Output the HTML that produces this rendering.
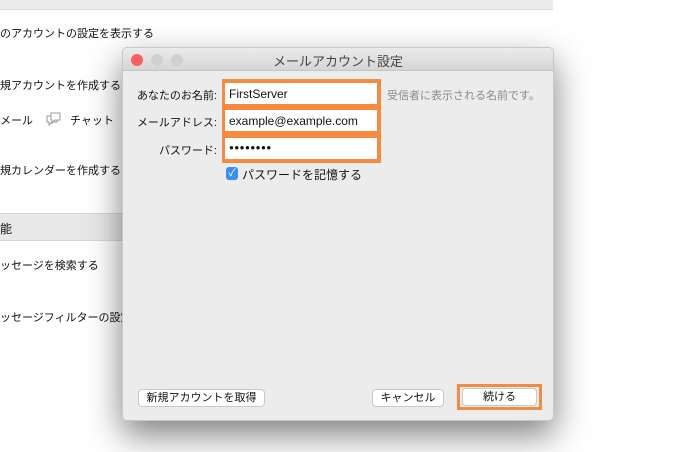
<!DOCTYPE html><html><head><meta charset="utf-8"><style>
*{margin:0;padding:0;box-sizing:border-box}
body{width:676px;height:452px;background:#fff;position:relative;overflow:hidden;font-family:"Liberation Sans","Noto Sans CJK JP",sans-serif;font-size:11px;color:#111}
.a{position:absolute;white-space:nowrap}
</style></head><body>
<div class="a" style="left:0;top:0;width:553px;height:10px;background:#ececec;border-bottom:1px solid #ddd"></div>
<div class="a" style="left:0;top:25px">のアカウントの設定を表示する</div>
<div class="a" style="left:0;top:77px">規アカウントを作成する:</div>
<div class="a" style="left:0;top:112px">メール</div>
<svg class="a" style="left:46px;top:111px" width="18" height="17" viewBox="0 0 18 17"><path d="M5 2h9v7H9l-3 3V9H5z" fill="none" stroke="#999"/><path d="M5 5H1v6h2v3l3-3h5V9" fill="none" stroke="#999"/></svg>
<div class="a" style="left:70px;top:112px">チャット</div>
<div class="a" style="left:0;top:162px">規カレンダーを作成する</div>
<div class="a" style="left:0;top:213px;width:553px;height:28px;background:#e8e8e8;border-top:1px solid #d8d8d8;border-bottom:1px solid #d8d8d8"></div>
<div class="a" style="left:0;top:220px;font-size:12px">能</div>
<div class="a" style="left:0;top:257px">ッセージを検索する</div>
<div class="a" style="left:0;top:309px">ッセージフィルターの設定</div>

<div class="a" style="left:122px;top:47px;width:432px;height:374px;background:#ececec;border:1px solid #c8c8c8;border-radius:5px;box-shadow:0 14px 34px rgba(0,0,0,.5);overflow:hidden">
 <div class="a" style="left:0;top:0;width:430px;height:23px;background:linear-gradient(#ebebeb,#d6d6d6);border-bottom:1px solid #c4c4c4"></div>
 <div class="a" style="left:8px;top:6px;width:12px;height:12px;border-radius:6px;background:#fc605c"></div>
 <div class="a" style="left:28px;top:6px;width:12px;height:12px;border-radius:6px;background:#d0d0d0"></div>
 <div class="a" style="left:48px;top:6px;width:12px;height:12px;border-radius:6px;background:#d0d0d0"></div>
 <div class="a" style="left:0;top:3px;width:430px;text-align:center;font-size:13px;color:#444">メールアカウント設定</div>
</div>
<div class="a" style="left:122px;top:87px;width:95px;text-align:right">あなたのお名前:</div>
<div class="a" style="left:122px;top:114px;width:95px;text-align:right">メールアドレス:</div>
<div class="a" style="left:122px;top:142px;width:95px;text-align:right">パスワード:</div>
<div class="a" style="left:222px;top:79px;width:159px;height:84px;background:#f68b3f"></div>
<div class="a" style="left:225px;top:83px;width:152px;height:21px;background:#fff;padding:4px 4px;font-size:12px">FirstServer</div>
<div class="a" style="left:225px;top:110px;width:152px;height:21px;background:#fff;padding:4px 4px;font-size:12px">example@example.com</div>
<div class="a" style="left:225px;top:138px;width:152px;height:21px;background:#fff;padding:5px 4px;font-size:8px;letter-spacing:0.5px">●●●●●●●●</div>
<div class="a" style="left:387px;top:87px;color:#8a8a8a">受信者に表示される名前です。</div>
<div class="a" style="left:226px;top:167px;width:12px;height:13px;border-radius:3px;background:#3d8ef2;color:#fff;font-size:10px;line-height:13px;text-align:center">✓</div>
<div class="a" style="left:242px;top:166px;font-size:12px">パスワードを記憶する</div>
<div class="a" style="left:138px;top:389px;width:127px;height:18px;background:#fff;border:1px solid #c8c8c8;border-radius:4px;text-align:center;line-height:16px">新規アカウントを取得</div>
<div class="a" style="left:372px;top:389px;width:72px;height:18px;background:#fff;border:1px solid #c8c8c8;border-radius:4px;text-align:center;line-height:16px">キャンセル</div>
<div class="a" style="left:457px;top:384px;width:85px;height:26px;border:3px solid #f68b3f"></div>
<div class="a" style="left:462px;top:388px;width:75px;height:18px;background:#fff;border:1px solid #c8c8c8;border-radius:4px;text-align:center;line-height:16px">続ける</div>
</body></html>
